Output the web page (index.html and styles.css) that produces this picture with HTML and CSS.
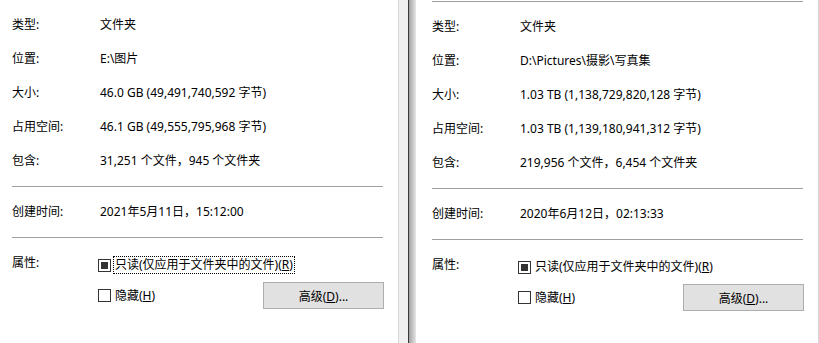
FILE: index.html
```html
<!DOCTYPE html>
<html lang="zh-CN">

<head>
    <meta charset="UTF-8">
    <meta name="viewport" content="width=device-width, initial-scale=1.0">
    <title>文件夹属性</title>
    <link rel="stylesheet" href="styles.css">
</head>

<body>
    <div class="screen">
        <!-- 左侧窗口 -->
        <section class="props props-left">
            <div class="sheet">
                <hr class="rule">
                <dl class="info">
                    <div class="row"><dt>类型:</dt><dd>文件夹</dd></div>
                    <div class="row"><dt>位置:</dt><dd>E:\图片</dd></div>
                    <div class="row"><dt>大小:</dt><dd>46.0 GB (49,491,740,592 字节)</dd></div>
                    <div class="row"><dt>占用空间:</dt><dd>46.1 GB (49,555,795,968 字节)</dd></div>
                    <div class="row"><dt>包含:</dt><dd>31,251 个文件，945 个文件夹</dd></div>
                </dl>
                <hr class="rule">
                <dl class="info">
                    <div class="row"><dt>创建时间:</dt><dd>2021年5月11日，15:12:00</dd></div>
                </dl>
                <hr class="rule">
                <div class="attrs">
                    <span class="attr-label">属性:</span>
                    <div class="attr-body">
                        <label class="check"><span class="box checked"></span><span class="check-text focus">只读(仅应用于文件夹中的文件)(<u>R</u>)</span></label>
                        <div class="attr-row">
                            <label class="check"><span class="box"></span><span class="check-text">隐藏(<u>H</u>)</span></label>
                            <button class="btn">高级(<u>D</u>)...</button>
                        </div>
                    </div>
                </div>
            </div>
        </section>

        <div class="divider"></div>

        <!-- 右侧窗口 -->
        <section class="props props-right">
            <div class="sheet">
                <hr class="rule">
                <dl class="info">
                    <div class="row"><dt>类型:</dt><dd>文件夹</dd></div>
                    <div class="row"><dt>位置:</dt><dd>D:\Pictures\摄影\写真集</dd></div>
                    <div class="row"><dt>大小:</dt><dd>1.03 TB (1,138,729,820,128 字节)</dd></div>
                    <div class="row"><dt>占用空间:</dt><dd>1.03 TB (1,139,180,941,312 字节)</dd></div>
                    <div class="row"><dt>包含:</dt><dd>219,956 个文件，6,454 个文件夹</dd></div>
                </dl>
                <hr class="rule">
                <dl class="info">
                    <div class="row"><dt>创建时间:</dt><dd>2020年6月12日，02:13:33</dd></div>
                </dl>
                <hr class="rule">
                <div class="attrs">
                    <span class="attr-label">属性:</span>
                    <div class="attr-body">
                        <label class="check"><span class="box checked"></span><span class="check-text">只读(仅应用于文件夹中的文件)(<u>R</u>)</span></label>
                        <div class="attr-row">
                            <label class="check"><span class="box"></span><span class="check-text">隐藏(<u>H</u>)</span></label>
                            <button class="btn">高级(<u>D</u>)...</button>
                        </div>
                    </div>
                </div>
            </div>
        </section>
    </div>
</body>

</html>
```

FILE: styles.css
```css
*{
    margin: 0;
    padding: 0;
    box-sizing: border-box;
}
body{
    background: #fff;
    color: #000;
    font-family: "Noto Sans", "Noto Sans CJK SC", sans-serif;
    font-size: 12px;
}
.screen{
    display: flex;
    height: 343px;
    overflow: hidden;
}
.props{
    background: #fff;
    border-right: 1px solid #d6d6d6;
}
.props-left{
    width: 399px;
    padding: 0 15px 0 12px;
}
.props-right{
    width: 403px;
    padding: 1px 15px 0 16px;
}
/* 左边的窗口往上错开两像素 */
.props-left .sheet{
    margin-top: -1px;
}
.divider{
    width: 17px;
    background: linear-gradient(to right, #f0f0f0 0, #f0f0f0 9px, #3a3a3a 9px, #3a3a3a 10px, #a2a2a2 10px, #e6e6e6 17px);
}
.rule{
    border: 0;
    border-top: 1px solid #a0a0a0;
}
.info{
    margin: 8px 0;
}
.row{
    display: flex;
    height: 34px;
    line-height: 34px;
    white-space: nowrap;
}
.row dt{
    width: 88px;
    flex: none;
}
.attrs{
    display: grid;
    grid-template-columns: 86px 1fr;
    padding-top: 18px;
}
.attr-label{
    line-height: 14px;
}
.check{
    display: flex;
    align-items: center;
    height: 18px;
    white-space: nowrap;
}
.box{
    position: relative;
    width: 13px;
    height: 13px;
    margin-right: 2px;
    border: 1px solid #333;
    background: #fff;
    flex: none;
}
.box.checked::after{
    content: "";
    position: absolute;
    left: 2px;
    top: 2px;
    width: 7px;
    height: 7px;
    background: #333;
}
.check-text{
    padding: 0 1px;
    line-height: 16px;
    border: 1px dotted transparent;
}
.check-text.focus{
    border-color: #000;
}
.attr-row{
    display: flex;
    align-items: center;
    margin-top: 8px;
}
.btn{
    margin-left: auto;
    margin-right: -1px;
    width: 121px;
    height: 27px;
    background: #e1e1e1;
    border: 1px solid #adadad;
    color: #000;
    font: inherit;
}
```
